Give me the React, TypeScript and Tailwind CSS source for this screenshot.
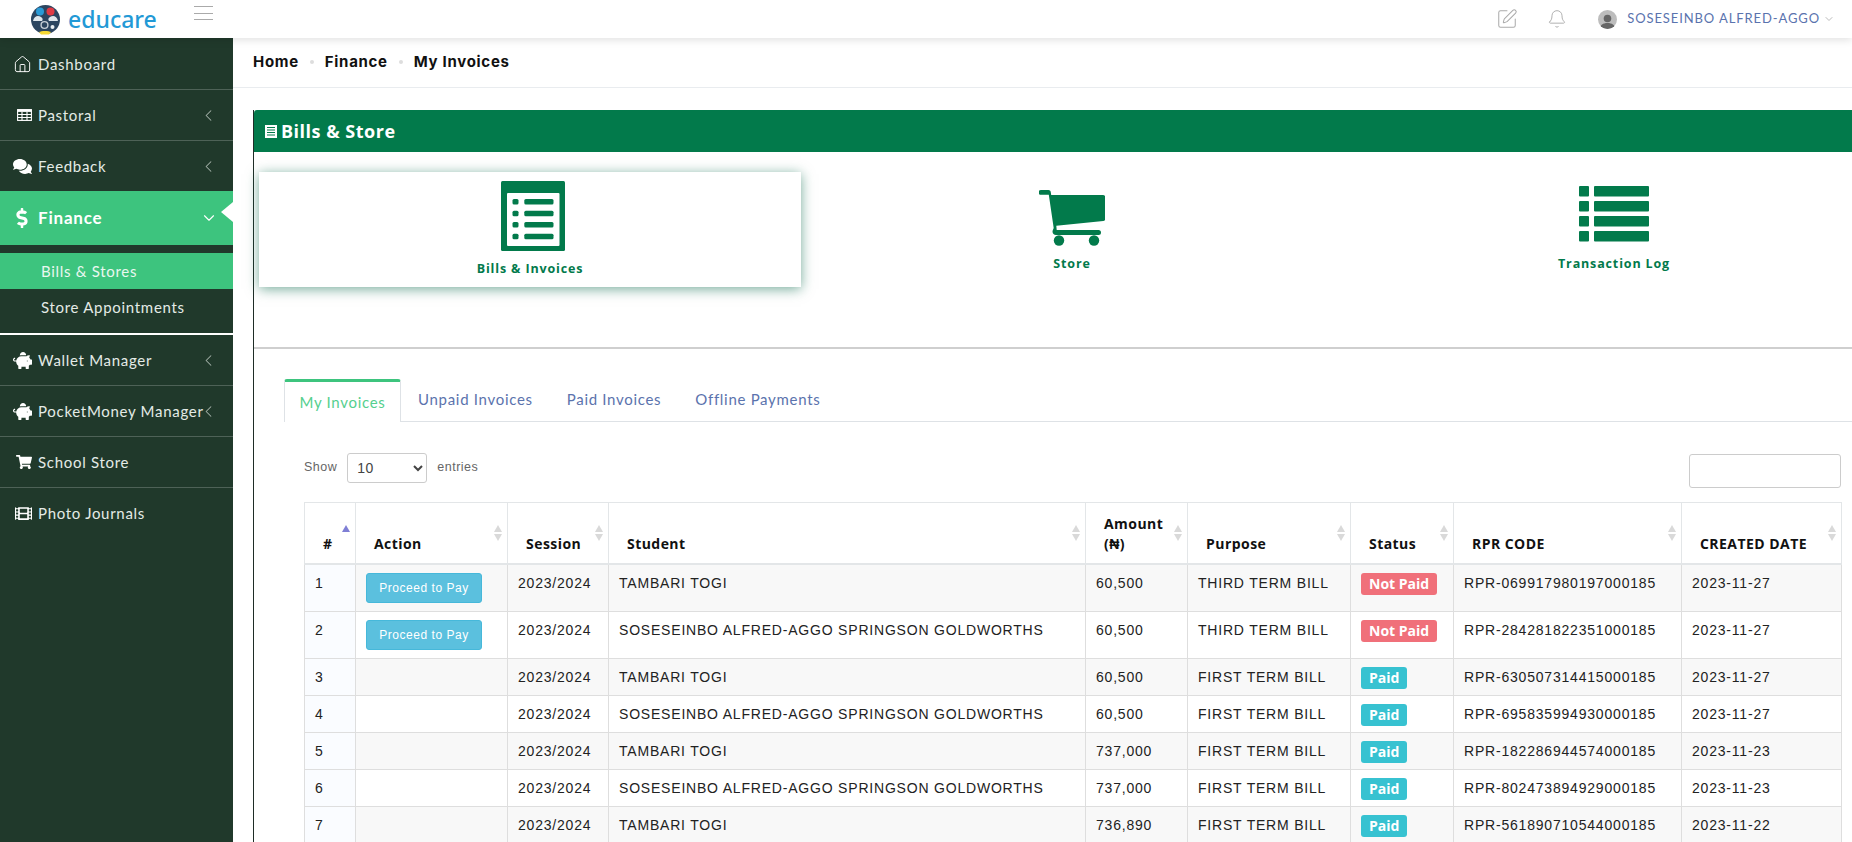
import React from 'react';
import { Home, ChevronLeft, ChevronDown, SquarePen, Bell } from 'lucide-react';
import { FaComments, FaDollarSign, FaPiggyBank, FaShoppingCart, FaFilm } from 'react-icons/fa';

const rows = [
  { id: 1, pay: true, student: 'TAMBARI TOGI', amount: '60,500', purpose: 'THIRD TERM BILL', paid: false, code: 'RPR-069917980197000185', date: '2023-11-27' },
  { id: 2, pay: true, student: 'SOSESEINBO ALFRED-AGGO SPRINGSON GOLDWORTHS', amount: '60,500', purpose: 'THIRD TERM BILL', paid: false, code: 'RPR-284281822351000185', date: '2023-11-27' },
  { id: 3, pay: false, student: 'TAMBARI TOGI', amount: '60,500', purpose: 'FIRST TERM BILL', paid: true, code: 'RPR-630507314415000185', date: '2023-11-27' },
  { id: 4, pay: false, student: 'SOSESEINBO ALFRED-AGGO SPRINGSON GOLDWORTHS', amount: '60,500', purpose: 'FIRST TERM BILL', paid: true, code: 'RPR-695835994930000185', date: '2023-11-27' },
  { id: 5, pay: false, student: 'TAMBARI TOGI', amount: '737,000', purpose: 'FIRST TERM BILL', paid: true, code: 'RPR-182286944574000185', date: '2023-11-23' },
  { id: 6, pay: false, student: 'SOSESEINBO ALFRED-AGGO SPRINGSON GOLDWORTHS', amount: '737,000', purpose: 'FIRST TERM BILL', paid: true, code: 'RPR-802473894929000185', date: '2023-11-23' },
  { id: 7, pay: false, student: 'TAMBARI TOGI', amount: '736,890', purpose: 'FIRST TERM BILL', paid: true, code: 'RPR-561890710544000185', date: '2023-11-22' },
];

const headers = [
  { label: '#', w: 'w-[51px]', sorted: true },
  { label: 'Action', w: 'w-[152px]' },
  { label: 'Session', w: 'w-[101px]' },
  { label: 'Student', w: 'w-[477px]' },
  { label: 'Amount (₦)', w: 'w-[102px]' },
  { label: 'Purpose', w: 'w-[163px]' },
  { label: 'Status', w: 'w-[103px]' },
  { label: 'RPR CODE', w: 'w-[228px]' },
  { label: 'CREATED DATE', w: 'w-[160px]' },
];

const cell = 'border border-[#dedede] align-top px-[10px] pt-[8px]';

function Logo() {
  return (
    <div className="flex items-center gap-[7px] w-[159px] ml-[30px]">
      <svg width="31" height="31" viewBox="0 0 31 31" className="shrink-0">
        <circle cx="15.5" cy="15.5" r="14.5" fill="#2c4560" />
        <circle cx="10" cy="7.5" r="4" fill="#2a9ad6" />
        <circle cx="20.5" cy="7.5" r="4" fill="#e03a45" />
        <path d="M3 17c1-5 5-6 8-4 2 1 2 3 1 4zM28 17c-1-5-5-6-8-4-2 1-2 3-1 4z" fill="#dfe6ec" />
        <circle cx="14.5" cy="21" r="3.4" fill="none" stroke="#c4ccd4" strokeWidth="1.4" />
        <circle cx="22.5" cy="23" r="2" fill="#e9eef2" />
        <path d="M9 28c2-1.500 10-1.500 12 0l-2 2.500h-8z" fill="#f5d933" />
      </svg>
      <span className="text-[23px] leading-none font-medium text-[#2299d6] font-['Noto_Sans',sans-serif]">educare</span>
    </div>
  );
}

function TableIcon() {
  return (
    <svg width="15" height="12" viewBox="0 0 15 12" fill="none" stroke="#fff" strokeWidth="1.100">
      <rect x="0.6" y="0.6" width="13.800" height="10.800" />
      <path d="M0.6 1.800h13.800" strokeWidth="2.200" />
      <path d="M0.6 5.500h13.800M0.6 8.500h13.800M5 3v8.400M10 3v8.400" />
    </svg>
  );
}

function NavItem({ icon, label, arrow = false, last = false, h = 'h-[51px]' }: { icon: React.ReactNode; label: string; arrow?: boolean; last?: boolean; h?: string }) {
  return (
    <div className={`relative ${h} flex items-center text-[#e4ebe6] ${last ? '' : 'border-b border-[#4e6257]'}`}>
      <span className="w-[38px] flex justify-end pr-[6px] text-white">{icon}</span>
      <span className="text-[15px] tracking-[0.7px] whitespace-nowrap">{label}</span>
      {arrow && <ChevronLeft size={19} strokeWidth={1.300} className="absolute left-[199px] text-[#a7b4ac]" />}
    </div>
  );
}

function SortArrows({ active = false }: { active?: boolean }) {
  return (
    <span className="absolute right-[5px] top-[22px] flex flex-col gap-[2px]">
      <span className={`w-0 h-0 border-x-[4px] border-x-transparent border-b-[7px] ${active ? 'border-b-[#7f7fd5]' : 'border-b-[#d9d9d9]'}`} />
      {!active && <span className="w-0 h-0 border-x-[4px] border-x-transparent border-t-[7px] border-t-[#d9d9d9]" />}
    </span>
  );
}

function InvoiceIcon() {
  return (
    <svg width="64" height="70" viewBox="0 0 64 70" fill="#027a4b" className="ml-[6px]">
      <rect width="64" height="70" rx="1.500" />
      <rect x="6" y="12" width="52.500" height="53" rx="1" fill="#fff" />
      {[18, 29.700, 41, 52.700].map((y) => (
        <g key={y}>
          <rect x="11.500" y={y} width="6" height="5.500" rx="1.500" />
          <rect x="23.300" y={y} width="29.200" height="5.500" rx="1.500" />
        </g>
      ))}
    </svg>
  );
}

function CartIcon() {
  return (
    <svg width="66" height="56" viewBox="0 0 66 56" fill="#027a4b">
      <path d="M2 0h7.500c1.200 0 2 .7 2.200 1.800l.5 3.200h51.800c1.400 0 2.500 1.100 2.500 2.500v21c0 1.300-.9 2.300-2.200 2.500l-47 4.700.4 4.300h41.800a2.500 2.500 0 0 1 0 5H17c-2.500 0-4-2.300-3.300-4.400l1-2.600L9.800 4.800H2A2.400 2.400 0 0 1 2 0z" />
      <circle cx="20" cy="50.500" r="5.200" />
      <circle cx="55" cy="50.500" r="5.200" />
    </svg>
  );
}

function LogIcon() {
  return (
    <svg width="70" height="56" viewBox="0 0 70 56" fill="#027a4b">
      {[0, 15, 30, 45].map((y) => (
        <g key={y}>
          <rect y={y} width="10" height="10.500" rx="1" />
          <rect x="15" y={y} width="55" height="10.500" rx="1" />
        </g>
      ))}
    </svg>
  );
}

export default function App() {
  return (
    <div className="h-screen overflow-hidden flex flex-col bg-white font-['Lato',sans-serif]">
      {/* Top bar */}
      <header className="h-[38px] shrink-0 flex items-center shadow-[0_2px_8px_rgba(0,0,0,0.12)] relative z-10 bg-white">
        <div className="w-[194px] shrink-0"><Logo /></div>
        <div className="flex flex-col gap-[5.5px] w-[19px] mb-[12px]">
          <span className="h-px bg-[#aaa]" />
          <span className="h-px bg-[#aaa]" />
          <span className="h-px bg-[#aaa]" />
        </div>
        <div className="ml-auto flex items-center text-[#aaa]">
          <SquarePen size={22} strokeWidth={1.100} />
          <Bell size={20} strokeWidth={1.100} className="ml-[29px]" />
          <span className="ml-[31px] w-[19px] h-[19px] rounded-full bg-[#bdbdbd] overflow-hidden flex items-end justify-center">
            <svg width="15" height="16" viewBox="0 0 15 16" fill="#666"><circle cx="7.500" cy="5.500" r="3.800" /><path d="M0 16c0-4 3-6 7.500-6S15 12 15 16z" /></svg>
          </span>
          <span className="ml-[10px] text-[13px] tracking-[0.9px] text-[#5a73ae] whitespace-nowrap">SOSESEINBO ALFRED-AGGO</span>
          <ChevronDown size={12} className="ml-[3px] mr-[17px] text-[#bbb]" />
        </div>
      </header>

      <div className="flex flex-1 min-h-0">
        {/* Sidebar */}
        <aside className="w-[233px] shrink-0 bg-[#20392b] pt-px">
          <NavItem icon={<Home size={19} strokeWidth={1.200} />} label="Dashboard" />
          <NavItem icon={<TableIcon />} label="Pastoral" arrow />
          <NavItem icon={<FaComments size={19} />} label="Feedback" arrow last h="h-[50px]" />
          <div className="relative h-[54px] flex items-center bg-[#3dc47e] text-white">
            <span className="w-[38px] flex justify-end pr-[6px]"><FaDollarSign size={20} /></span>
            <span className="text-[17px] font-bold tracking-[0.8px]">Finance</span>
            <ChevronDown size={18} strokeWidth={1.500} className="absolute left-[200px]" />
            <span className="absolute right-0 top-[11px] w-0 h-0 border-y-[10px] border-y-transparent border-r-[12px] border-r-white" />
          </div>
          <div className="h-[8px]" />
          <div className="h-[36px] flex items-center pl-[41px] bg-[#3dc47e] text-[#eaf7f0] text-[15px] tracking-[0.7px]">Bills &amp; Stores</div>
          <div className="h-[46px] border-b-2 border-white flex items-center pl-[41px] text-[#e4ebe6] text-[15px] tracking-[0.7px] pb-[8px]">Store Appointments</div>
          <NavItem icon={<FaPiggyBank size={19} />} label="Wallet Manager" arrow />
          <NavItem icon={<FaPiggyBank size={19} />} label="PocketMoney Manager" arrow />
          <NavItem icon={<FaShoppingCart size={16} />} label="School Store" />
          <NavItem icon={<FaFilm size={17} />} label="Photo Journals" last />
        </aside>

        {/* Main */}
        <main className="flex-1 min-w-0">
          <div className="h-[50px] flex items-center gap-[11px] pl-[20px] pb-px border-b border-[#e9ecef] text-[15px] font-bold tracking-[0.7px] text-[#111] font-['Inter',sans-serif]">
            <span>Home</span>
            <span className="w-[4px] h-[4px] rounded-full bg-[#ddd]" />
            <span>Finance</span>
            <span className="w-[4px] h-[4px] rounded-full bg-[#ddd]" />
            <span>My Invoices</span>
          </div>

          <section className="mt-[22px] ml-[20px] border-l border-[#1f2d27]">
            <div className="h-[42px] flex items-center pl-[11px] gap-[4px] bg-[#027a4b] text-white rounded-tl-[3px]">
              <svg width="12" height="13" viewBox="0 0 12 13" fill="#fff">
                <path fillRule="evenodd" d="M0 0h12v13H0zM2 2v1h8V2zm0 2.500v1h8v-1zm0 2.500v1h8V7zm0 2.500v1h8v-1z" />
              </svg>
              <span className="text-[18px] font-bold tracking-[0.5px] font-['Open_Sans',sans-serif]">Bills &amp; Store</span>
            </div>

            <div className="h-[197px] border-b-2 border-[#cfcfcf] pt-[20px] pl-[5px] grid grid-cols-[542px_542px_542px] items-start text-[12.5px] font-bold tracking-[0.85px] text-[#027a4b] font-['Open_Sans',sans-serif]">
              <div className="h-[115px] flex flex-col items-center pt-[9px] gap-[9px] bg-white shadow-[0_2px_12px_rgba(2,100,70,0.55)]">
                <InvoiceIcon />
                <span>Bills &amp; Invoices</span>
              </div>
              <div className="flex flex-col items-center pt-[18px] gap-[9px]">
                <CartIcon />
                <span>Store</span>
              </div>
              <div className="flex flex-col items-center pt-[14px] gap-[13px]">
                <LogIcon />
                <span>Transaction Log</span>
              </div>
            </div>

            {/* Tabs */}
            <div className="ml-[30px] mt-[30px] flex items-end h-[43px] border-b border-[#dee2e6] text-[15px] tracking-[0.7px] text-[#5b73ad]">
              <div className="w-[117px] h-[43px] -mb-px flex items-center justify-center bg-white border border-b-0 border-[#dee2e6] border-t-[3px] border-t-[#3dc47e] rounded-t-[3px] text-[#55cf8e]">My Invoices</div>
              <div className="px-[17px] h-[43px] flex items-center">Unpaid Invoices</div>
              <div className="px-[17px] h-[43px] flex items-center">Paid Invoices</div>
              <div className="px-[17px] h-[43px] flex items-center">Offline Payments</div>
            </div>

            <div className="pl-[50px] pr-[11px]">
              {/* Table controls */}
              <div className="mt-[32px] h-[34px] flex items-start justify-between text-[12.5px] text-[#666] font-['Liberation_Sans',sans-serif] tracking-[0.5px]">
                <div className="flex items-center gap-[10px] h-[30px] pb-[3px]">
                  <span>Show</span>
                  <select defaultValue="10" className="w-[80px] h-[30px] pl-[5px] border border-[#ccc] rounded-[3px] bg-white text-[14px] text-[#444]">
                    <option>10</option>
                    <option>25</option>
                    <option>50</option>
                  </select>
                  <span>entries</span>
                </div>
                <input className="w-[152px] h-[34px] border border-[#ccc] rounded-[3px] bg-white" />
              </div>

              {/* Invoices table */}
              <table className="mt-[14px] w-[1537px] table-fixed border-collapse text-[14px] tracking-[0.8px] text-[#222] font-['Liberation_Sans',sans-serif]">
                <thead>
                  <tr className="h-[61px]">
                    {headers.map((h) => (
                      <th key={h.label} className={`${h.w} relative border border-[#e3e6e8] border-b-2 align-bottom text-left pl-[18px] pr-[20px] pb-[9px] text-[14px] leading-[20px] font-bold tracking-[0.45px] text-[#111] font-['Open_Sans',sans-serif]`}>
                        {h.label}
                        <SortArrows active={h.sorted} />
                      </th>
                    ))}
                  </tr>
                </thead>
                <tbody>
                  {rows.map((r) => (
                    <tr key={r.id} className={`${r.id === 1 ? 'h-[48px]' : r.pay ? 'h-[47px]' : 'h-[37px]'} ${r.id % 2 === 1 ? 'bg-[#f8f8f8]' : 'bg-white'}`}>
                      <td className={`${cell} bg-[#fafcff]`}>{r.id}</td>
                      <td className={cell}>
                        {r.pay && (
                          <button className="w-[116px] h-[30px] rounded-[3px] bg-[#5bc0de] border border-[#46b8da] text-white text-[12px] tracking-[0.55px]">Proceed to Pay</button>
                        )}
                      </td>
                      <td className={cell}>2023/2024</td>
                      <td className={`${cell} whitespace-nowrap`}>{r.student}</td>
                      <td className={cell}>{r.amount}</td>
                      <td className={`${cell} whitespace-nowrap`}>{r.purpose}</td>
                      <td className={cell}>
                        {r.paid ? (
                          <span className="inline-block px-[8px] rounded-[3px] bg-[#37c2d1] text-white text-[14px] leading-[22px] font-bold tracking-normal font-['Open_Sans',sans-serif]">Paid</span>
                        ) : (
                          <span className="inline-block px-[8px] rounded-[3px] bg-[#f0707a] text-white text-[14px] leading-[22px] font-bold tracking-normal font-['Open_Sans',sans-serif]">Not Paid</span>
                        )}
                      </td>
                      <td className={`${cell} whitespace-nowrap`}>{r.code}</td>
                      <td className={cell}>{r.date}</td>
                    </tr>
                  ))}
                </tbody>
              </table>
            </div>
          </section>
        </main>
      </div>
    </div>
  );
}
